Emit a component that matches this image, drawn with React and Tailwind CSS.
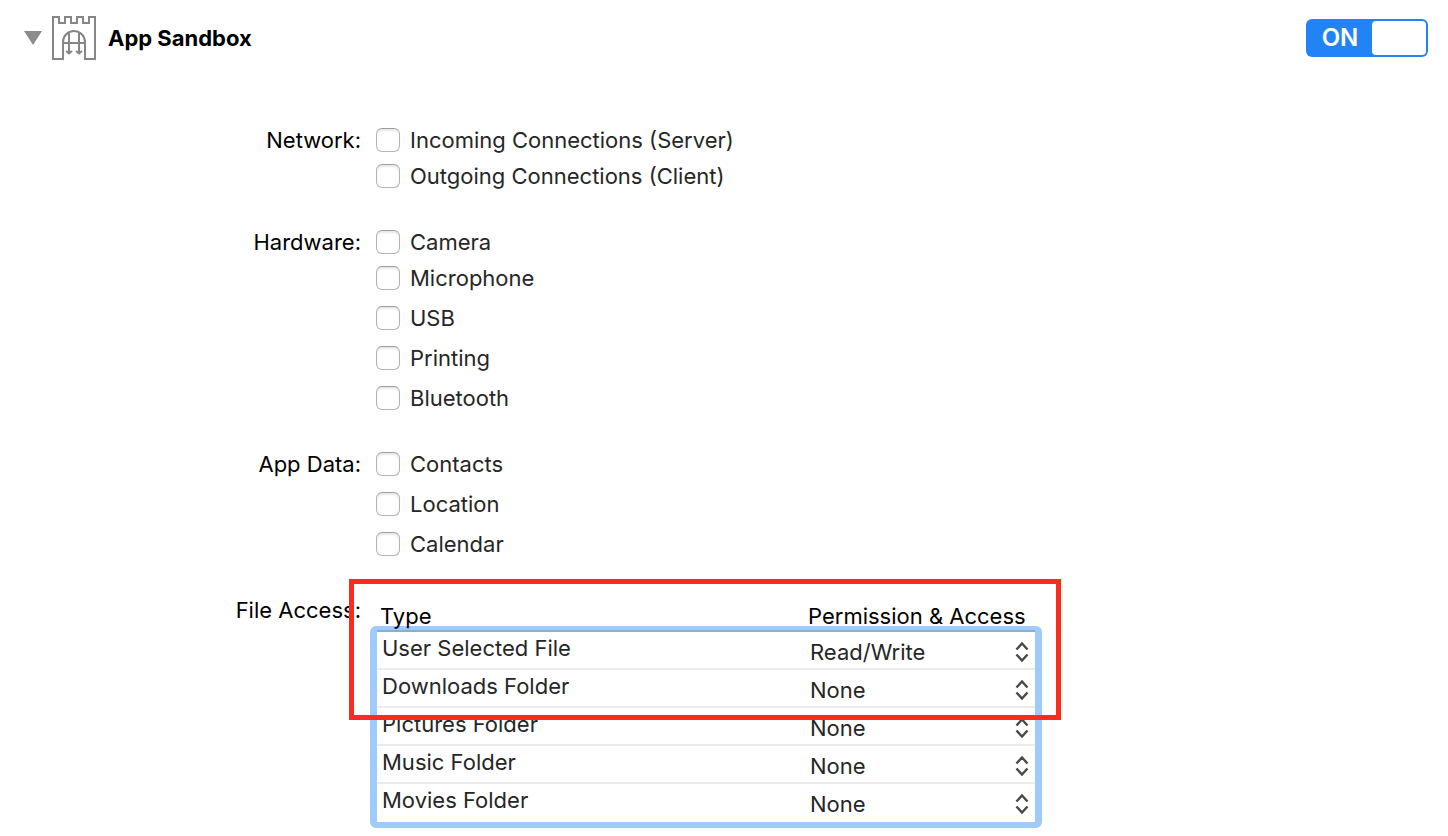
import { useState } from 'react'

const GROUPS = [
  {
    label: 'Network',
    items: ['Incoming Connections (Server)', 'Outgoing Connections (Client)'],
  },
  {
    label: 'Hardware',
    items: ['Camera', 'Microphone', 'USB', 'Printing', 'Bluetooth'],
  },
  {
    label: 'App Data',
    items: ['Contacts', 'Location', 'Calendar'],
    loose: true,
  },
]

const FOLDERS = [
  { type: 'User Selected File', access: 'Read/Write' },
  { type: 'Downloads Folder', access: 'None' },
  { type: 'Pictures Folder', access: 'None' },
  { type: 'Music Folder', access: 'None' },
  { type: 'Movies Folder', access: 'None' },
]

const ACCESS_LEVELS = ['None', 'Read Only', 'Read/Write']

function CastleIcon() {
  return (
    <svg width="44" height="44" viewBox="0 0 44 44" fill="none" stroke="#868686" strokeWidth="2" aria-hidden="true">
      <path d="M1 43V1h6v6h6V1h6v6h6V1h6v6h6V1h6v42H33V26a11 11 0 0 0-22 0v17z" />
      <path d="M11 27h22M17 17v20M27 17v20" />
      <path d="M14 35l3 2.5 3-2.5M24 35l3 2.5 3-2.5" />
    </svg>
  )
}

function Stepper() {
  return (
    <svg
      className="pointer-events-none absolute right-1.5 top-2.5"
      width="14"
      height="20"
      viewBox="0 0 14 20"
      fill="none"
      stroke="#484848"
      strokeWidth="2.4"
      aria-hidden="true"
    >
      <path d="M1.5 7.5l5.5-6 5.5 6M1.5 12.5l5.5 6 5.5-6" />
    </svg>
  )
}

function Toggle({ on, onChange }) {
  return (
    <button
      role="switch"
      aria-checked={on}
      aria-label="App Sandbox"
      onClick={() => onChange(!on)}
      className={`flex h-[38px] w-[122px] items-center rounded-md p-0.5 text-white ${
        on ? 'bg-[#2283f6]' : 'flex-row-reverse bg-gray-400'
      }`}
    >
      <span className="flex-1 text-center text-2xl font-semibold">{on ? 'ON' : 'OFF'}</span>
      <span className="h-full w-[54px] rounded bg-white" />
    </button>
  )
}

function CheckRow({ label, loose }) {
  return (
    <label className={`flex h-6 items-center gap-2.5 text-[#262626] ${loose ? 'mt-4' : 'mt-3 first:mt-0'}`}>
      <input
        type="checkbox"
        className="size-6 shrink-0 appearance-none rounded-md border border-[#b4b4b4] border-t-[#9c9c9c] bg-white shadow-[inset_0_2px_2px_#e8e8e8] checked:bg-[#2283f6]"
      />
      {label}
    </label>
  )
}

function CheckGroup({ label, items, loose }) {
  return (
    <div role="group" aria-label={label} className="grid grid-cols-[361px_1fr] gap-x-[15px]">
      <p className="text-right">{label}:</p>
      <div>
        {items.map((item, i) => (
          <CheckRow key={item} label={item} loose={i > 1 || (loose && i > 0)} />
        ))}
      </div>
    </div>
  )
}

function FileAccessTable() {
  return (
    <div className="relative w-[658px] pt-1.5">
      {/* Focus ring round the rows */}
      <div className="pointer-events-none absolute -inset-x-[7px] -bottom-1.5 top-7 rounded-md border-x-[7px] border-y-[6px] border-[#9fcbfb]" />
      <div className="pointer-events-none absolute inset-x-0 top-8 h-0.5 bg-[#86aedb]" />

      <table className="relative w-full table-fixed border-separate border-spacing-0 text-left">
        <thead>
          <tr className="h-7 align-top">
            <th className="w-[431px] pl-[3px] font-normal">Type</th>
            <th className="font-normal">Permission &amp; Access</th>
          </tr>
        </thead>
        <tbody className="text-[#262626]">
          {FOLDERS.map(({ type, access }) => (
            <tr key={type} className="group h-[38px] align-top">
              <td className="border-b-2 border-[#ebebeb] pl-[5px] pt-1 group-last:border-b-0">{type}</td>
              <td className="border-b-2 border-[#ebebeb] p-0 group-last:border-b-0">
                <div className="relative">
                  <select
                    aria-label={`${type} access`}
                    defaultValue={access}
                    className="block h-9 w-full appearance-none bg-transparent pl-0.5 pt-1 leading-6 outline-none"
                  >
                    {ACCESS_LEVELS.map(level => (
                      <option key={level}>{level}</option>
                    ))}
                  </select>
                  <Stepper />
                </div>
              </td>
            </tr>
          ))}
        </tbody>
      </table>

      {/* Callout */}
      <div className="pointer-events-none absolute -left-7 -top-[19px] h-[141px] w-[712px] border-[5px] border-[#fc2b1e]" />
    </div>
  )
}

export default function App() {
  const [on, setOn] = useState(true)
  const [expanded, setExpanded] = useState(true)

  return (
    <main className="bg-white pb-3.5 font-['Inter',sans-serif] text-[22px] leading-6 text-black">
      <header className="flex items-center pl-6 pr-5 pt-4">
        <button aria-label="Toggle section" onClick={() => setExpanded(v => !v)} className="mr-2.5">
          <svg width="18" height="14" viewBox="0 0 18 14" aria-hidden="true">
            <path d="M0 0h18L9 14z" fill="#8c8c8c" />
          </svg>
        </button>
        <CastleIcon />
        <h1 className="ml-3 flex-1 font-bold">App Sandbox</h1>
        <Toggle on={on} onChange={setOn} />
      </header>

      {expanded && (
        <div className="mt-[68px] flex flex-col gap-[42px]">
          {GROUPS.map(group => (
            <CheckGroup key={group.label} {...group} />
          ))}
          <div className="grid grid-cols-[361px_1fr] gap-x-4">
            <p className="text-right">File Access:</p>
            <FileAccessTable />
          </div>
        </div>
      )}
    </main>
  )
}
